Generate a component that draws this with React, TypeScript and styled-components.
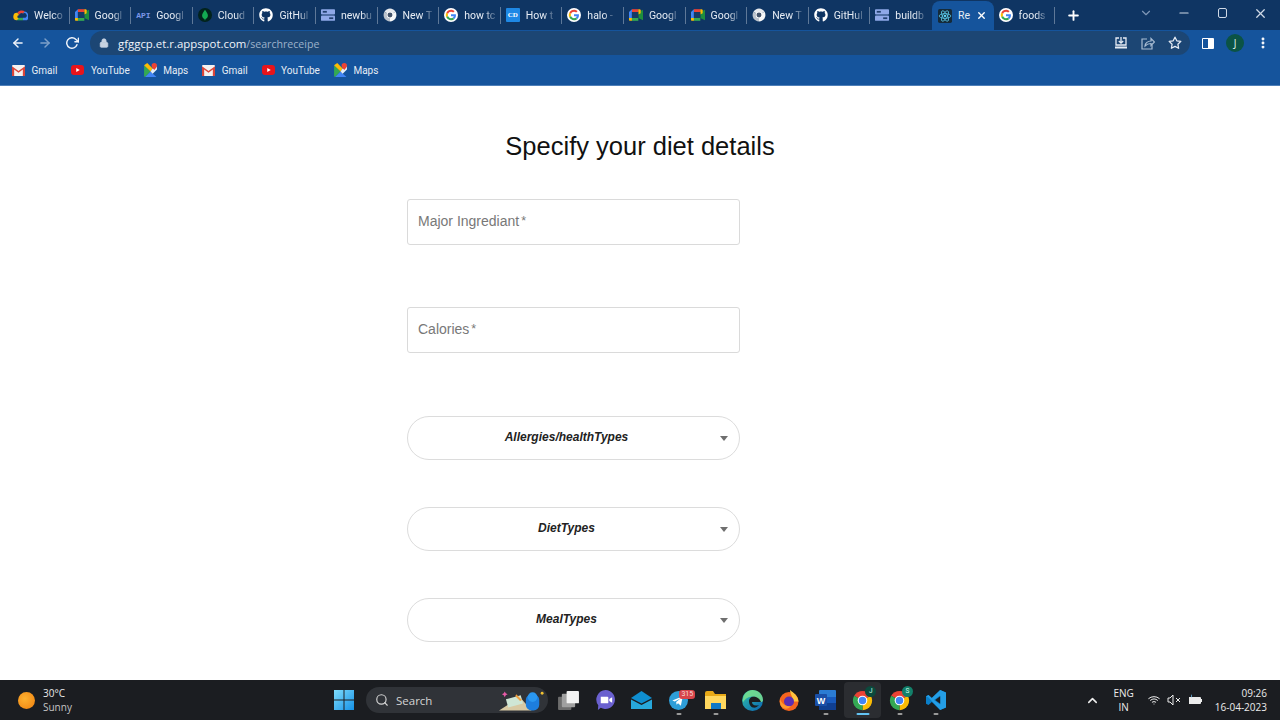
import React from "react";
import styled, { createGlobalStyle } from "styled-components";
import { FaGithub } from "react-icons/fa";
import { FiArrowLeft, FiArrowRight, FiRotateCw, FiSearch, FiChevronDown, FiChevronUp, FiStar, FiX, FiPlus, FiMinus, FiMoreVertical, FiLock, FiWifi } from "react-icons/fi";

const Global = createGlobalStyle`
  html, body { margin: 0; padding: 0; background: #fff; height: 100%; overflow: hidden; }
  * { box-sizing: border-box; }
`;
const Screen = styled.div`width:1280px;height:720px;display:flex;flex-direction:column;overflow:hidden;font-family:Roboto,"Liberation Sans",sans-serif;`;
const TabStrip = styled.div`height:30px;background:#0f3563;display:flex;align-items:flex-end;padding-left:8px;flex:none;`;
const Tab = styled.div<{ $active?: boolean; $sep?: boolean }>`
  width:61.6px;height:${p => p.$active ? "29px" : "30px"};display:flex;align-items:center;gap:6px;padding-left:${p => p.$active ? "6px" : "5px"};flex:none;position:relative;
  background:${p => p.$active ? "#15549c" : "transparent"};border-radius:${p => p.$active ? "8px 8px 0 0" : "0"};
  ${p => p.$sep ? `&::after{content:"";position:absolute;right:0;top:7px;height:17px;width:1px;background:#5e7898;}` : ""}
`;
const TabText = styled.span`font-size:10.5px;color:#e6ecf4;white-space:nowrap;flex:none;
  -webkit-mask-image:linear-gradient(90deg,#000 65%,rgba(0,0,0,.25) 100%);mask-image:linear-gradient(90deg,#000 65%,rgba(0,0,0,.25) 100%);`;
const ActiveText = styled.span`font-size:10.5px;color:#e6ecf4;flex:none;`;
const IconSlot = styled.span`width:14px;height:14px;display:inline-flex;align-items:center;justify-content:center;flex:none;color:#fff;font-size:14px;`;
const ApiMark = styled.span`font:700 8px "Liberation Mono",monospace;color:#7c97e8;width:14px;flex:none;`;
const CdMark = styled.span`width:14px;height:14px;background:#1e88e5;color:#fff;font:700 7px "Liberation Serif",serif;display:flex;align-items:center;justify-content:center;flex:none;border-radius:1px;`;
const StripRight = styled.div`display:flex;align-items:center;height:30px;color:#dfe7f1;flex:1;`;
const NewTab = styled.span`margin-left:11px;display:flex;color:#fff;font-size:15px;`;
const WinControls = styled.div`margin-left:auto;display:flex;align-items:center;height:30px;padding-right:1px;padding-bottom:4px;`;
const WinSlot = styled.span<{ $dim?: boolean }>`width:38px;display:flex;justify-content:center;font-size:14px;color:${p => p.$dim ? "#7f97b6" : "#cfd9e6"};`;
const RestoreBox = styled.span`width:9px;height:10px;border:1px solid #cfd9e6;border-radius:2px;display:block;`;
const Toolbar = styled.div`height:26px;background:#15549c;display:flex;align-items:center;flex:none;padding-left:11px;`;
const Nav = styled.span<{ $dim?: boolean }>`width:14px;margin-right:13px;display:flex;font-size:14px;color:${p => p.$dim ? "#7da0c9" : "#f0f4fa"};`;
const Omni = styled.div`width:1100px;height:24px;margin-left:-2px;background:#1c4674;border-radius:12px;display:flex;align-items:center;padding:0 8px 0 9px;color:#c7d3e2;font-size:13px;`;
const Url = styled.span`font:11.4px "Open Sans",sans-serif;color:#f0f4fa;margin-left:9px;white-space:nowrap;`;
const UrlPath = styled.span`color:#9db2cb;font-size:10.6px;`;
const OmniIcons = styled.div`margin-left:auto;display:flex;align-items:center;gap:13px;color:#d9e3ef;`;
const Profile = styled.div`display:flex;align-items:center;margin-left:12px;gap:12px;color:#fff;`;
const PanelIcon = styled.span`width:12px;height:11px;border:1.5px solid #fff;border-right-width:6px;display:block;border-radius:1px;`;
const Avatar = styled.span<{ $bg?: string }>`width:18px;height:18px;border-radius:50%;background:${p => p.$bg || "#0b5345"};color:#e4f0ea;font:10px "Open Sans",sans-serif;display:flex;align-items:center;justify-content:center;`;
const Bookmarks = styled.div`height:30px;background:#15549c;border-bottom:1px solid #4e7fb8;display:flex;align-items:center;padding-left:12px;flex:none;padding-bottom:1px;`;
const Bookmark = styled.div`display:flex;align-items:center;gap:6.5px;font-size:10px;color:#e6ecf4;margin-right:14px;`;
const Main = styled.main`flex:1;background:#fff;position:relative;overflow:hidden;`;
const Title = styled.h1`margin:0;padding-top:43px;text-align:center;font:400 25.5px/35px "Liberation Sans",Arial,sans-serif;color:#111;`;
const Form = styled.div`margin-left:407px;width:333px;padding-top:35px;display:flex;flex-direction:column;`;
const Field = styled.div<{ $last?: boolean }>`height:46px;border:1px solid #dadada;border-radius:3px;display:flex;align-items:center;padding:0 0 2px 10px;font:14px "Liberation Sans",Arial,sans-serif;color:#787878;margin-bottom:${p => p.$last ? "63px" : "62px"};`;
const Star = styled.span`font-size:12.5px;margin-left:2px;`;
const Select = styled.div`height:44px;border:1px solid #dcdcdc;border-radius:22px;display:flex;align-items:center;justify-content:center;position:relative;font:italic 700 12px "Liberation Sans",Arial,sans-serif;color:#222;margin-bottom:47px;padding:0 14px 2px 0;`;
const Caret = styled.span`position:absolute;right:11px;top:19px;width:0;height:0;border-left:4.5px solid transparent;border-right:4.5px solid transparent;border-top:5px solid #6f6f6f;`;
const Taskbar = styled.footer`height:40px;background:#1b1d21;display:flex;align-items:center;flex:none;position:relative;`;
const Weather = styled.div`width:334px;display:flex;align-items:center;padding-left:18px;gap:8px;color:#e8e8e8;font:10px/14px "Open Sans",sans-serif;flex:none;`;
const Sun = styled.span`width:17px;height:17px;border-radius:50%;background:radial-gradient(circle at 40% 40%,#fdb130,#ef7f0e);display:block;`;
const WeatherText = styled.div`display:flex;flex-direction:column;`;
const Muted = styled.span`color:#c4c4c4;`;
const SearchBox = styled.div`width:182px;height:26px;margin-left:12px;background:#303338;border-radius:13px;display:flex;align-items:center;padding-left:9px;gap:7px;color:#d4d4d4;font:11.5px "Open Sans",sans-serif;position:relative;flex:none;`;
const SearchArt = styled.span`position:absolute;right:3px;top:0;display:flex;`;
const Dock = styled.div`display:flex;align-items:center;margin-left:2px;`;
const DockItem = styled.div<{ $on?: boolean; $dot?: string }>`
  width:36.8px;height:36px;display:flex;align-items:center;justify-content:center;position:relative;border-radius:4px;
  ${p => p.$on ? "background:#2b2d31;" : ""}
  ${p => p.$dot ? `&::after{content:"";position:absolute;bottom:3px;left:50%;transform:translateX(-50%);height:2px;border-radius:1px;width:${p.$dot === "on" ? "13px" : "5px"};background:${p.$dot === "on" ? "#63c3f3" : "#9a9a9a"};}` : ""}
`;
const Badge = styled.span`position:absolute;left:19px;top:8px;background:#d8454a;color:#f6d8d8;font-size:7px;line-height:9px;padding:0 2px;border-radius:3px;`;
const MiniAvatar = styled.span<{ $bg: string }>`position:absolute;right:5px;top:4px;width:11px;height:11px;border-radius:50%;background:${p => p.$bg};color:#cfe;font-size:6.5px;line-height:11px;text-align:center;`;
const Tray = styled.div`margin-left:auto;display:flex;align-items:center;color:#ececec;padding-right:13px;font:10px "Open Sans",sans-serif;`;
const Lang = styled.div`display:flex;flex-direction:column;align-items:center;line-height:14px;margin-left:13px;margin-right:14px;`;
const TrayIcons = styled.div`display:flex;align-items:center;gap:7px;font-size:12px;`;
const Clock = styled.div`display:flex;flex-direction:column;align-items:flex-end;line-height:14px;margin-left:12px;`;

const GoogleG = () => (
  <svg width="14" height="14" viewBox="0 0 48 48">
    <circle cx="24" cy="24" r="24" fill="#fff" />
    <path fill="#EA4335" d="M24 13c3 0 5.400 1 7.300 2.800l5-5C33.200 8 29 6 24 6 17 6 11 10 8 16l5.800 4.500C15.200 16.200 19.200 13 24 13z" />
    <path fill="#4285F4" d="M41 24.500c0-1.300-.1-2.500-.3-3.500H24v7h9.600c-.4 2.200-1.700 4-3.600 5.300l5.600 4.300C38.900 34.500 41 30 41 24.500z" />
    <path fill="#FBBC05" d="M13.800 27.500c-.4-1.100-.6-2.300-.6-3.500s.2-2.400.6-3.500L8 16c-1.300 2.400-2 5.100-2 8s.7 5.600 2 8z" />
    <path fill="#34A853" d="M24 42c5 0 9-1.600 11.600-4.400L30 33.300c-1.500 1-3.500 1.700-6 1.700-4.800 0-8.800-3.200-10.200-7.500L8 32c3 6 9 10 16 10z" />
  </svg>
);
const ChromeIcon = ({ size = 14, mono = false }: { size?: number; mono?: boolean }) => (
  <svg width={size} height={size} viewBox="0 0 48 48">
    <path fill={mono ? "#e6e9ed" : "#EA4335"} d="M24 24L4.950 13A22 22 0 0 1 43.050 13z" />
    <path fill={mono ? "#f6f7f8" : "#FBBC05"} d="M24 24L43.050 13A22 22 0 0 1 24 46z" />
    <path fill={mono ? "#bcc3cc" : "#34A853"} d="M24 24L24 46A22 22 0 0 1 4.950 13z" />
    <circle cx="24" cy="24" r="11" fill="#fff" />
    <circle cx="24" cy="24" r="8.500" fill={mono ? "#43536a" : "#4285F4"} />
  </svg>
);
const Cloud = () => (
  <svg width="15" height="12" viewBox="0 0 24 19">
    <path fill="#EA4335" d="M7 6a8 8 0 0 1 12-2l-3 3a4 4 0 0 0-6 2z" />
    <path fill="#4285F4" d="M19 4a8 8 0 0 1 3 14l-6 0 0-4h4a3 3 0 0 0-4-7z" />
    <path fill="#34A853" d="M6 18h10v-4H6z" />
    <path fill="#FBBC05" d="M7 6A6 6 0 0 0 6 18l3-3a2.500 2.500 0 0 1 1-5z" />
  </svg>
);
const Meet = () => (
  <svg width="14" height="12" viewBox="0 0 24 20">
    <path fill="#EA4335" d="M5 0h11v5H5z" />
    <path fill="#4285F4" d="M0 5l5-5v15H0z" />
    <path fill="#34A853" d="M5 15h11v5H5z" />
    <path fill="#1e8e3e" d="M16 5v10l8 4V1z" />
    <path fill="#FBBC05" d="M16 0h2a2 2 0 0 1 2 2v5l-4 2z" />
    <path fill="#FBBC05" d="M0 15h5v5H2a2 2 0 0 1-2-2z" />
    <path fill="#163a66" d="M5 5h11v10H5z" />
  </svg>
);
const Leaf = () => (
  <svg width="14" height="14" viewBox="0 0 24 24">
    <circle cx="12" cy="12" r="12" fill="#02231c" />
    <path fill="#13aa52" d="M12 3c3 4 5 7 5 10 0 3-2 5-4 6l-1 3-1-3c-2-1-4-3-4-6 0-3 2-6 5-10z" />
  </svg>
);
const Board = () => (
  <svg width="14" height="12" viewBox="0 0 24 20">
    <rect width="24" height="9" rx="1.500" fill="#8fa8e8" />
    <rect y="11" width="24" height="9" rx="1.500" fill="#8fa8e8" />
    <rect x="3" y="3" width="7" height="3" fill="#21406f" />
    <rect x="14" y="14" width="7" height="3" fill="#21406f" />
  </svg>
);
const Atom = () => (
  <svg width="14" height="14" viewBox="0 0 24 24">
    <rect width="24" height="24" rx="3" fill="#152b3a" />
    <g fill="none" stroke="#61dafb" strokeWidth="1.200">
      <ellipse cx="12" cy="12" rx="10" ry="4" />
      <ellipse cx="12" cy="12" rx="10" ry="4" transform="rotate(60 12 12)" />
      <ellipse cx="12" cy="12" rx="10" ry="4" transform="rotate(120 12 12)" />
    </g>
    <circle cx="12" cy="12" r="2" fill="#61dafb" />
  </svg>
);
const Gmail = () => (
  <svg width="13" height="11" viewBox="0 0 24 20">
    <rect width="24" height="20" rx="2" fill="#f2f2f2" />
    <path fill="#d9453a" d="M0 2l12 9 12-9v18h-4V8l-8 6-8-6v12H0z" />
  </svg>
);
const YouTube = () => (
  <svg width="13" height="10" viewBox="0 0 26 20">
    <rect width="26" height="20" rx="6" fill="#e8141b" />
    <path fill="#fff" d="M10.500 6l7 4-7 4z" />
  </svg>
);
const MapsIcon = () => (
  <svg width="13" height="14" viewBox="0 0 24 26">
    <path fill="#34A853" d="M0 4l12 12-10 10H2a2 2 0 0 1-2-2z" />
    <path fill="#4285F4" d="M2 26l10-10 11 10z" />
    <path fill="#FBBC05" d="M0 4l6-4 10 10-4 6z" />
    <path fill="#fff" d="M16 10l8-4v6l-8 8-4-4z" opacity=".9" />
    <path fill="#EA4335" d="M19 0a5 5 0 0 1 5 5c0 3-3 5-5 8-2-3-5-5-5-8a5 5 0 0 1 5-5z" />
  </svg>
);
const Win = () => (
  <svg width="20" height="20" viewBox="0 0 20 20">
    <defs><linearGradient id="w" x1="0" y1="0" x2="1" y2="1"><stop offset="0" stopColor="#7fdcfb" /><stop offset="1" stopColor="#1591e6" /></linearGradient></defs>
    <path fill="url(#w)" d="M0 0h9.500v9.500H0zM10.500 0H20v9.500h-9.500zM0 10.500h9.500V20H0zM10.500 10.500H20V20h-9.500z" />
  </svg>
);
const Stack = () => (
  <svg width="21" height="19" viewBox="0 0 22 20">
    <rect y="6" width="14" height="14" rx="1" fill="#6d6d6d" />
    <rect x="4" y="3" width="14" height="14" rx="1" fill="#a0a0a0" />
    <rect x="9" y="0" width="13" height="13" rx="1" fill="#f2f2f2" />
  </svg>
);
const Chat = () => (
  <svg width="19" height="20" viewBox="0 0 20 21">
    <path fill="#6a60cf" d="M10 0a10 10 0 1 1-5 18.700L2 21l.4-5A10 10 0 0 1 10 0z" />
    <path fill="#fff" d="M5 7h7a1 1 0 0 1 1 1v5a1 1 0 0 1-1 1H5zM14 9.500l3-2v6l-3-2z" />
  </svg>
);
const Mail = () => (
  <svg width="21" height="18" viewBox="0 0 21 18">
    <path fill="#0f8ed0" d="M0 7L10.500 0 21 7l-10.500 5.500z" />
    <path fill="#27a8dc" d="M0 8.500l10.500 5.500L21 8.500V18H0z" />
  </svg>
);
const Telegram = () => (
  <svg width="19" height="19" viewBox="0 0 20 20">
    <circle cx="10" cy="10" r="10" fill="#2e9ed8" />
    <path fill="#fff" d="M3.500 10l11-4.500-2 10-3-2.500-1.500 1.500-.5-3 5-4-6.500 3.500z" />
  </svg>
);
const Folder = () => (
  <svg width="21" height="18" viewBox="0 0 21 18">
    <path fill="#e8a917" d="M0 2a2 2 0 0 1 2-2h6l2 3h11v3H0z" />
    <path fill="#ffd75e" d="M0 5h21v13H0z" />
    <rect x="6" y="12" width="10" height="6" fill="#0f78c7" />
  </svg>
);
const Edge = () => (
  <svg width="21" height="21" viewBox="0 0 21 21">
    <defs><linearGradient id="e" x1="0" y1="0" x2="1" y2="1"><stop offset="0" stopColor="#31c4a8" /><stop offset="1" stopColor="#0a63b4" /></linearGradient></defs>
    <circle cx="10.500" cy="10.500" r="10.500" fill="url(#e)" />
    <path fill="#1b1d21" d="M7 11c0-3 3-5 6-4.500S19 9 19 12h-9c0 3 3 4.500 7 3-1.500 2-4 3-6 2.500C8.500 17 7 14 7 11z" />
    <path fill="#7ee38c" d="M10.500 0C16 0 21 4 21 10c0 1.500-1 2-2 2-1 -3-4-5.500-8-5.500-4 0-8 2-10 6C0 5 5 0 10.500 0z" opacity=".8" />
  </svg>
);
const Firefox = () => (
  <svg width="20" height="21" viewBox="0 0 20 21">
    <circle cx="10" cy="11.500" r="9.500" fill="#f5641e" />
    <path fill="#ffc33d" d="M11 0c4 3 8 6 8.500 11.500H14C14 7 11 4 11 0z" />
    <circle cx="10" cy="11.500" r="5" fill="#5b2fb3" />
    <path fill="#ff9a2e" d="M1 9c2 5 6 8 11 7-2 3-7 4-10 0-1-2-1.500-5-1-7z" />
  </svg>
);
const Word = () => (
  <svg width="21" height="20" viewBox="0 0 21 20">
    <rect x="4" width="17" height="20" rx="1" fill="#2b7cd3" />
    <rect x="4" y="13" width="17" height="7" fill="#103f91" />
    <rect x="4" y="7" width="17" height="6" fill="#185abd" />
    <rect y="4" width="12" height="12" rx="1" fill="#1a4fa8" />
    <text x="6" y="13.500" fontSize="9" fontWeight="700" fill="#fff" textAnchor="middle" fontFamily="Liberation Sans">W</text>
  </svg>
);
const VSCode = () => (
  <svg width="20" height="20" viewBox="0 0 24 24">
    <path fill="#0a7fc9" d="M17 0l7 3v18l-7 3-10-9.500L3 18l-3-1.500v-9L3 6l4 3.500z" />
    <path fill="#2aa6ee" d="M17 0l7 3v18l-7 3V6.500L9.500 12 17 17.500V24L3 9 0 7.500 3 6l4 3.500z" opacity=".8" />
    <path fill="#1b1d21" d="M17 7.500L11 12l6 4.500z" />
  </svg>
);
const Art = () => (
  <svg width="46" height="26" viewBox="0 0 48 26">
    <path fill="#d8c9a3" d="M0 24L22 10l12 14z" />
    <rect x="8" y="10" width="16" height="9" fill="#cfe6d5" transform="rotate(-15 16 14)" />
    <path fill="#e85aa8" d="M6 4l1 2 2 1-2 1-1 2-1-2-2-1 2-1z" />
    <rect x="28" y="7" width="14" height="17" rx="6" fill="#1d7ede" />
    <circle cx="35" cy="10" r="5" fill="#2a97f0" />
    <circle cx="45" cy="6" r="1.500" fill="#f2c230" />
    <path fill="#f0a040" d="M18 7l6 6-2 1-5-5z" />
  </svg>
);

const tabs: { icon: React.ReactNode; label: string }[] = [
  { icon: <Cloud />, label: "Welco" },
  { icon: <Meet />, label: "Googl" },
  { icon: <ApiMark>API</ApiMark>, label: "Googl" },
  { icon: <Leaf />, label: "Cloud" },
  { icon: <IconSlot><FaGithub /></IconSlot>, label: "GitHul" },
  { icon: <Board />, label: "newbu" },
  { icon: <ChromeIcon mono />, label: "New T" },
  { icon: <GoogleG />, label: "how tc" },
  { icon: <CdMark>CD</CdMark>, label: "How t" },
  { icon: <GoogleG />, label: "halo -" },
  { icon: <Meet />, label: "Googl" },
  { icon: <Meet />, label: "Googl" },
  { icon: <ChromeIcon mono />, label: "New T" },
  { icon: <IconSlot><FaGithub /></IconSlot>, label: "GitHul" },
  { icon: <Board />, label: "buildb" },
];
const marks = [
  { icon: <Gmail />, label: "Gmail" },
  { icon: <YouTube />, label: "YouTube" },
  { icon: <MapsIcon />, label: "Maps" },
  { icon: <Gmail />, label: "Gmail" },
  { icon: <YouTube />, label: "YouTube" },
  { icon: <MapsIcon />, label: "Maps" },
];

export default function App() {
  return (
    <Screen>
      <Global />
      <TabStrip>
        {tabs.map((t, i) => (
          <Tab key={i} $sep={i !== 14}>
            {t.icon}
            <TabText>{t.label}</TabText>
          </Tab>
        ))}
        <Tab $active>
          <Atom />
          <ActiveText>Re</ActiveText>
          <FiX size={11} color="#fff" strokeWidth={3} />
        </Tab>
        <Tab $sep>
          <GoogleG />
          <TabText>foods</TabText>
        </Tab>
        <StripRight>
          <NewTab><FiPlus strokeWidth={3} /></NewTab>
          <WinControls>
            <WinSlot $dim><FiChevronDown /></WinSlot>
            <WinSlot><FiMinus /></WinSlot>
            <WinSlot><RestoreBox /></WinSlot>
            <WinSlot><FiX size={15} /></WinSlot>
          </WinControls>
        </StripRight>
      </TabStrip>
      <Toolbar>
        <Nav><FiArrowLeft strokeWidth={2.5} /></Nav>
        <Nav $dim><FiArrowRight strokeWidth={2.5} /></Nav>
        <Nav><FiRotateCw strokeWidth={2.5} /></Nav>
        <Omni>
          <FiLock size={10} fill="#c7d3e2" />
          <Url>gfggcp.et.r.appspot.com<UrlPath>/searchreceipe</UrlPath></Url>
          <OmniIcons>
            <svg width="14" height="13" viewBox="0 0 14 13" fill="none" stroke="#e6ecf4" strokeWidth="1.300">
              <path d="M5 1H2v7h10V1H9" /><path d="M7 0v6M4.800 4L7 6.200 9.200 4" /><path d="M1 10.500h12" strokeWidth="2" />
            </svg>
            <svg width="14" height="13" viewBox="0 0 14 13" fill="none" stroke="#a9bdd3" strokeWidth="1.200">
              <path d="M6 2H1v10h10V8" /><path d="M4 9c0-3 3-5 6-5V1.500L13.500 5 10 8.500V6.500C7.500 6.500 5.500 7.500 4 9z" />
            </svg>
            <FiStar size={14} color="#e6ecf4" strokeWidth={2.2} />
          </OmniIcons>
        </Omni>
        <Profile>
          <PanelIcon />
          <Avatar>J</Avatar>
          <FiMoreVertical size={14} strokeWidth={3} />
        </Profile>
      </Toolbar>
      <Bookmarks>
        {marks.map((m, i) => (
          <Bookmark key={i}>{m.icon}{m.label}</Bookmark>
        ))}
      </Bookmarks>
      <Main>
        <Title>Specify your diet details</Title>
        <Form>
          <Field>Major Ingrediant<Star>*</Star></Field>
          <Field $last>Calories<Star>*</Star></Field>
          <Select>Allergies/healthTypes<Caret /></Select>
          <Select>DietTypes<Caret /></Select>
          <Select>MealTypes<Caret /></Select>
        </Form>
      </Main>
      <Taskbar>
        <Weather>
          <Sun />
          <WeatherText><span>30°C</span><Muted>Sunny</Muted></WeatherText>
        </Weather>
        <Win />
        <SearchBox>
          <FiSearch size={14} />
          Search
          <SearchArt><Art /></SearchArt>
        </SearchBox>
        <Dock>
          <DockItem><Stack /></DockItem>
          <DockItem><Chat /></DockItem>
          <DockItem><Mail /></DockItem>
          <DockItem $dot="off"><Telegram /><Badge>315</Badge></DockItem>
          <DockItem $dot="off"><Folder /></DockItem>
          <DockItem><Edge /></DockItem>
          <DockItem><Firefox /></DockItem>
          <DockItem $dot="off"><Word /></DockItem>
          <DockItem $on $dot="on"><ChromeIcon size={21} /><MiniAvatar $bg="#0b4a3d">J</MiniAvatar></DockItem>
          <DockItem $dot="off"><ChromeIcon size={21} /><MiniAvatar $bg="#13806a">S</MiniAvatar></DockItem>
          <DockItem $dot="off"><VSCode /></DockItem>
        </Dock>
        <Tray>
          <FiChevronUp size={15} strokeWidth={2.5} />
          <Lang><span>ENG</span><span>IN</span></Lang>
          <TrayIcons>
            <FiWifi />
            <svg width="14" height="12" viewBox="0 0 14 12" fill="none" stroke="#ececec" strokeWidth="1"><path d="M1 4v4h2l3 3V1L3 4z" /><path d="M9 4l4 4M13 4l-4 4" /></svg>
            <svg width="15" height="12" viewBox="0 0 15 12"><path fill="#ececec" d="M1 3h11a1 1 0 0 1 1 1v1h1v3h-1v1a1 1 0 0 1-1 1H1z" /><path fill="#6cb8e8" d="M3 0l1 2-1 2z" /></svg>
          </TrayIcons>
          <Clock><span>09:26</span><span>16-04-2023</span></Clock>
        </Tray>
      </Taskbar>
    </Screen>
  );
}
